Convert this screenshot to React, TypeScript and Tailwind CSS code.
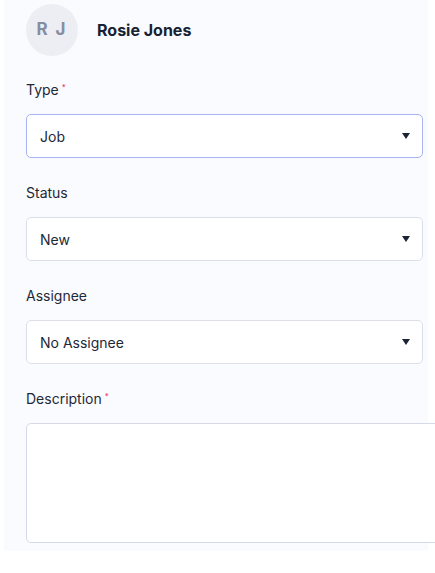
import React from "react";

function Caret() {
  return (
    <svg width="8" height="6" viewBox="0 0 8 6" className="shrink-0">
      <path d="M0 0 H8 L4 6 Z" fill="#1b2434" />
    </svg>
  );
}

function Label({ text, required }: { text: string; required?: boolean }) {
  return (
    <div className="h-5 flex items-start text-[14px] leading-5 text-[#1e2838]">
      <span>{text}</span>
      {required && <span className="ml-[3px] text-[8px] leading-[14px] text-[#e8336b]">*</span>}
    </div>
  );
}

function Select({ value, focused }: { value: string; focused?: boolean }) {
  return (
    <div
      className={
        focused
          ? "mt-[14px] h-[44px] w-[397px] rounded-[5px] border border-[#a8b4f5] bg-white flex items-center justify-between pl-[13px] pr-[12px]"
          : "mt-[14px] h-[44px] w-[397px] rounded-[5px] border border-[#dcdfea] bg-white flex items-center justify-between pl-[13px] pr-[12px]"
      }
    >
      <span className="text-[14px] text-[#1e2838]">{value}</span>
      <Caret />
    </div>
  );
}

export default function App() {
  return (
    <div
      className="w-[435px] h-[573px] bg-white overflow-hidden"
      style={{ fontFamily: "Inter, 'Noto Sans', sans-serif" }}
    >
      <div className="ml-[4px] w-[424px] h-[551px] bg-[#fafbfe] pl-[22px] pt-[4px] flex flex-col">
        <div className="flex items-center">
          <div className="w-[52px] h-[52px] rounded-full bg-[#eceef3] flex items-center justify-center text-[17px] font-bold text-[#868da2] tracking-[2px]">
            R J
          </div>
          <div className="ml-[19px] text-[16px] font-bold text-[#152233]">Rosie Jones</div>
        </div>

        <div className="mt-[24px]">
          <Label text="Type" required />
          <Select value="Job" focused />
        </div>
        <div className="mt-[25px]">
          <Label text="Status" />
          <Select value="New" />
        </div>
        <div className="mt-[25px]">
          <Label text="Assignee" />
          <Select value="No Assignee" />
        </div>
        <div className="mt-[25px]">
          <Label text="Description" required />
          <div className="mt-[14px] h-[120px] w-[430px] rounded-[5px] border border-[#d6d9e8] bg-white" />
        </div>
      </div>
    </div>
  );
}
